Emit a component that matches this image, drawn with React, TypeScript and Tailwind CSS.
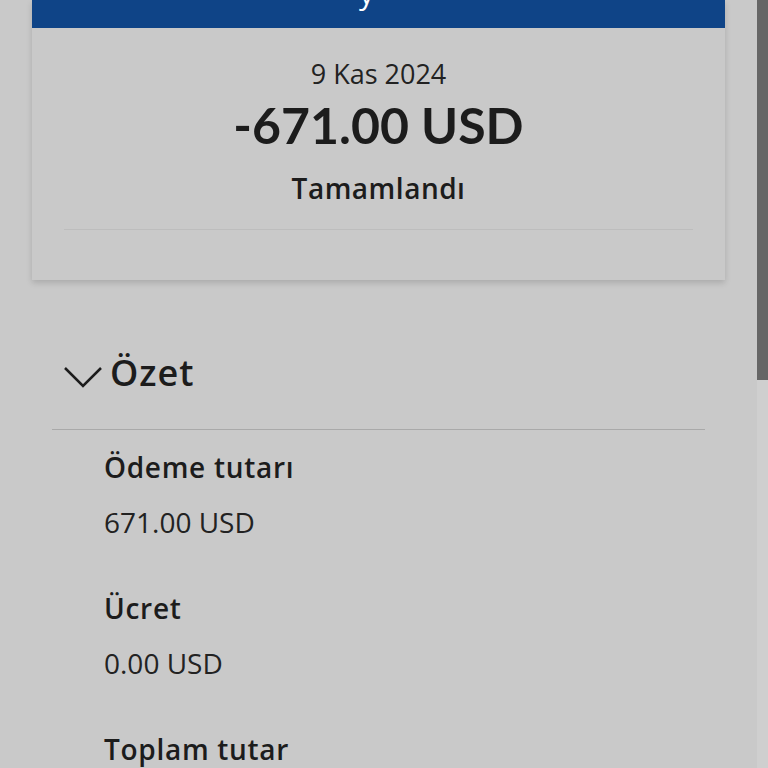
import { ReactNode } from "react";

const font = { fontFamily: "'Open Sans', 'Noto Sans', sans-serif" };

const SummaryItem = ({ label, value, first }: { label: string; value: string; first?: boolean }) => (
  <div className={first ? "mt-[19px]" : "mt-[50px]"}>
    <p className="text-[28px] leading-[36px] font-semibold tracking-[0.7px] text-[#1c1c1c]">{label}</p>
    <p className="mt-[19px] text-[28px] leading-[36px] text-[#222]">{value}</p>
  </div>
);

const Section = ({ title, children }: { title: string; children: ReactNode }) => (
  <div className="mx-[52px] mt-[63px]">
    <div className="flex items-center h-[60px] pl-[12px] gap-[8px]">
      <svg width="38" height="22" viewBox="0 0 38 22" fill="none" className="mt-[8px]">
        <polyline points="1,2 19,20 37,2" stroke="#1c1c1c" strokeWidth="2.5" />
      </svg>
      <span className="text-[36px] leading-[60px] font-semibold tracking-[1px] text-[#1c1c1c]">{title}</span>
    </div>
    <div className="mt-[26px] h-px bg-[#a9a9a9]" />
    <div className="pl-[52px]">{children}</div>
  </div>
);

export default function App() {
  return (
    <div className="flex h-[768px] overflow-hidden bg-[#c9c9c9]" style={font}>
      <div className="flex-1">
        {/* transaction card */}
        <div className="mx-[32px] bg-[#c9c9c9] shadow-[0_3px_6px_rgba(0,0,0,0.15)]">
          <div className="h-[28px] bg-[#0f4487] flex justify-center overflow-hidden">
            <span className="text-white text-[30px] leading-[30px] mt-[-22px] ml-[-24px]">y</span>
          </div>
          <div className="pt-[30px] pb-[50px] text-center text-[#1c1c1c]">
            <p className="text-[27px] leading-[32px] text-[#222]">9 Kas 2024</p>
            <p className="mt-[5px] text-[50px] leading-[60px] font-bold" style={{ fontFamily: "Lato, sans-serif" }}>
              -671.00 USD
            </p>
            <p className="mt-[15px] text-[28px] leading-[36px] font-semibold tracking-[0.5px]">Tamamlandı</p>
            <div className="mt-[23px] mx-[32px] h-px bg-[#bdbdbd]" />
          </div>
        </div>

        <Section title="Özet">
          <SummaryItem first label="Ödeme tutarı" value="671.00 USD" />
          <SummaryItem label="Ücret" value="0.00 USD" />
          <SummaryItem label="Toplam tutar" value="671.00 USD" />
        </Section>
      </div>
      {/* scrollbar */}
      <div className="w-[11px] shrink-0 bg-[#cfcfcf]">
        <div className="h-[380px] bg-[#666666]" />
      </div>
    </div>
  );
}
